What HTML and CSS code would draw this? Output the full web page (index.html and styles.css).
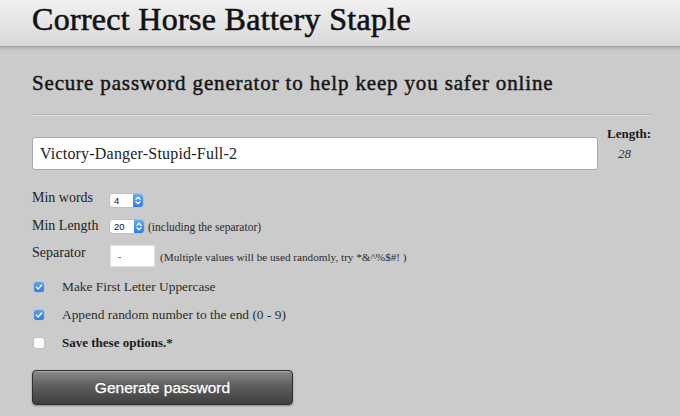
FILE: index.html
```html
<!DOCTYPE html>
<html>
<head>
<meta charset="utf-8">
<title>Correct Horse Battery Staple</title>
<link rel="stylesheet" href="styles.css">
</head>
<body>
<header class="top">
  <h1 class="title">Correct Horse Battery Staple</h1>
</header>
<main class="main">
  <h2 class="subtitle">Secure password generator to help keep you safer online</h2>
  <div class="rule"></div>
  <div class="pwrow">
    <div class="pwbox">Victory-Danger-Stupid-Full-2</div>
    <div class="lencol">
      <div class="lenlabel">Length:</div>
      <div class="lenval">28</div>
    </div>
  </div>

  <div class="opt opt-words">
    <span class="lbl">Min words</span>
    <span class="sel"><span class="selval">4</span><span class="step"><svg width="10" height="13" viewBox="0 0 10 13"><path d="M3 5.3 L5 3.3 L7 5.3 M3 7.7 L5 9.7 L7 7.7" fill="none" stroke="#fff" stroke-width="1.3" stroke-linecap="round" stroke-linejoin="round"/></svg></span></span>
  </div>
  <div class="opt opt-len">
    <span class="lbl">Min Length</span>
    <span class="sel"><span class="selval">20</span><span class="step"><svg width="10" height="13" viewBox="0 0 10 13"><path d="M3 5.3 L5 3.3 L7 5.3 M3 7.7 L5 9.7 L7 7.7" fill="none" stroke="#fff" stroke-width="1.3" stroke-linecap="round" stroke-linejoin="round"/></svg></span></span>
    <span class="note note-len">(including the separator)</span>
  </div>
  <div class="opt opt-sep">
    <span class="lbl">Separator</span>
    <span class="sepbox">-</span>
    <span class="note note-sep">(Multiple values will be used randomly, try *&amp;^%$#! )</span>
  </div>

  <div class="chk first">
    <span class="box on"><svg width="10" height="10" viewBox="0 0 10 10"><path d="M2.4 5.2 L4.2 7 L7.6 3" fill="none" stroke="#fff" stroke-width="1.5" stroke-linecap="round" stroke-linejoin="round"/></svg></span>
    <span class="chklbl">Make First Letter Uppercase</span>
  </div>
  <div class="chk">
    <span class="box on"><svg width="10" height="10" viewBox="0 0 10 10"><path d="M2.4 5.2 L4.2 7 L7.6 3" fill="none" stroke="#fff" stroke-width="1.5" stroke-linecap="round" stroke-linejoin="round"/></svg></span>
    <span class="chklbl">Append random number to the end (0 - 9)</span>
  </div>
  <div class="chk">
    <span class="box"></span>
    <span class="chklbl strong">Save these options.*</span>
  </div>

  <div class="btn">Generate password</div>
</main>
</body>
</html>
```

FILE: styles.css
```css
html, body {
  margin: 0;
  padding: 0;
}
body {
  background: #cbcbcb;
  font-family: "Liberation Serif", "Times New Roman", serif;
  color: #1e1e1e;
  width: 680px;
  height: 416px;
  overflow: hidden;
}
.top {
  height: 46px;
  background: linear-gradient(#f1f1f1, #d9d9d9);
  border-bottom: 1px solid #a2a2a2;
  box-shadow: 0 1px 4px rgba(0,0,0,0.18);
  padding-left: 32px;
}
.title {
  margin: 0;
  font-size: 32px;
  line-height: 38px;
  font-weight: normal;
  letter-spacing: 0.3px;
  color: #111;
  -webkit-text-stroke: 0.6px #111;
}
.main {
  width: 620px;
  margin-left: 32px;
}
.subtitle {
  margin: 23px 0 0 0;
  font-size: 21px;
  line-height: 26px;
  font-weight: normal;
  letter-spacing: 0.85px;
  color: #151515;
  -webkit-text-stroke: 0.45px #151515;
}
.rule {
  margin-top: 18px;
  border-top: 1px solid #b4b4b4;
  border-bottom: 1px solid #dcdcdc;
}
.pwrow {
  display: flex;
  margin-top: 10px;
  height: 44px;
}
.pwbox {
  margin-top: 11px;
  width: 557px;
  height: 31px;
  background: #fff;
  border: 1px solid #a9a9a9;
  border-radius: 3px;
  padding-left: 7px;
  font-size: 16px;
  line-height: 32px;
  letter-spacing: 0.2px;
  color: #222;
}
.lencol {
  margin-left: 9px;
}
.lenlabel {
  font-size: 13px;
  font-weight: bold;
  line-height: 16px;
  color: #1a1a1a;
}
.lenval {
  margin-top: 4px;
  padding-left: 11px;
  font-size: 13px;
  font-style: italic;
  line-height: 16px;
  color: #333;
}
.opt {
  display: flex;
  align-items: flex-start;
}
.opt-words {
  margin-top: 20px;
  height: 28px;
}
.opt-len {
  height: 27px;
}
.opt-sep {
  height: 22px;
}
.lbl {
  width: 78px;
  font-size: 14px;
  line-height: 16px;
  color: #222;
}
.sel {
  display: flex;
  height: 13px;
  background: #fff;
  border-radius: 3px;
  box-shadow: 0 0 0 0.5px rgba(0,0,0,0.12);
}
.opt-words .sel {
  margin-top: 4px;
  width: 33px;
}
.opt-len .sel {
  margin-top: 2px;
  width: 34px;
}
.selval {
  flex: 1;
  padding-left: 4px;
  font-family: "Liberation Sans", Arial, sans-serif;
  font-size: 9.5px;
  line-height: 13px;
  color: #111;
}
.step {
  width: 10px;
  height: 13px;
  border-radius: 0 3px 3px 0;
  background: linear-gradient(#6aa9f4, #2f7be6);
  display: flex;
}
.note {
  font-size: 11.5px;
  line-height: 14px;
  color: #2a2a2a;
}
.note-len {
  margin-left: 4px;
  margin-top: 2px;
}
.sepbox {
  width: 45px;
  height: 22px;
  background: #fff;
  box-sizing: border-box;
  border: 1px solid #e2e2e2;
  padding-left: 7px;
  font-family: "Liberation Sans", Arial, sans-serif;
  font-size: 10px;
  line-height: 21px;
  color: #666;
}
.note-sep {
  margin-left: 5px;
  margin-top: 5px;
  font-size: 11.2px;
}
.chk {
  display: flex;
  align-items: center;
  height: 16px;
  margin-top: 12px;
}
.box {
  width: 10px;
  height: 10px;
  margin-left: 2px;
  border-radius: 2.5px;
  background: #fff;
  display: flex;
  box-shadow: 0 0 0 0.5px rgba(0,0,0,0.08);
}
.box.on {
  background: linear-gradient(#5a9ef7, #2f7ce8);
}
.chklbl {
  margin-left: 18px;
  font-size: 13.4px;
  line-height: 16px;
  color: #2b2b2b;
}
.chklbl.strong {
  font-weight: bold;
  font-size: 13px;
  color: #1a1a1a;
}
.btn {
  margin-top: 19px;
  width: 261px;
  height: 35px;
  box-sizing: border-box;
  border: 1px solid #2f2f2f;
  border-radius: 4px;
  background: linear-gradient(#8a8a8a, #5e5e5e 45%, #3e3e3e);
  box-shadow: 0 1px 2px rgba(0,0,0,0.35), inset 0 1px 0 rgba(255,255,255,0.25);
  color: #fff;
  text-align: center;
  font-family: "Liberation Sans", Arial, sans-serif;
  font-size: 15.5px;
  line-height: 33px;
  -webkit-text-stroke: 0.3px #fff;
  text-shadow: 0 -1px 0 rgba(0,0,0,0.35);
}
```
